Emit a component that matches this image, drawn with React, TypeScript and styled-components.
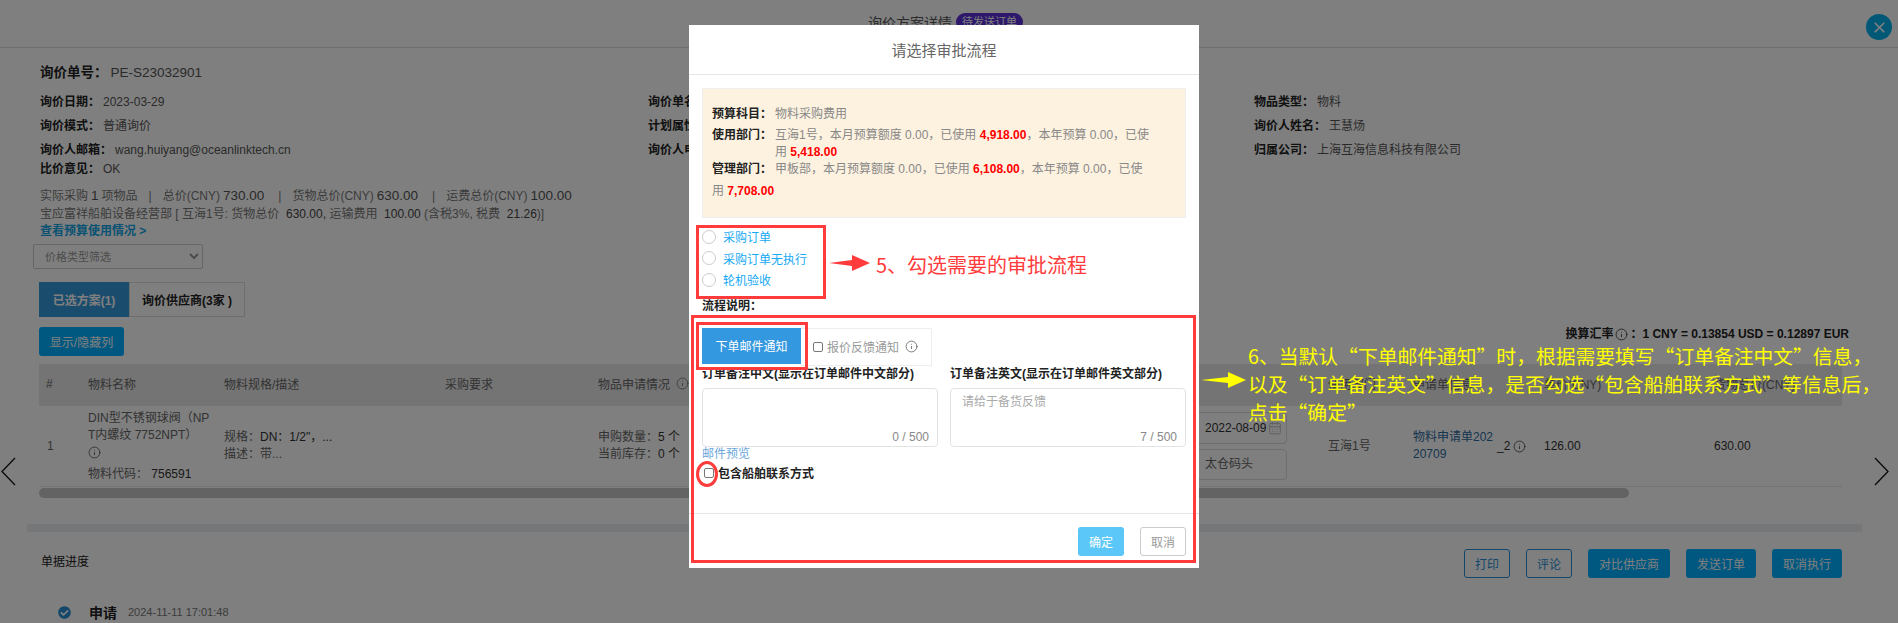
import React from 'react'
import styled, { createGlobalStyle } from 'styled-components'
import { Info, CalendarDays, X } from 'lucide-react'
import { FaCheckCircle } from 'react-icons/fa'

const BLUE = '#00aeff'
const COLUMNS = '49px 136px 221px 153px 502px 228px 85px 131px 170px 128px'

const GlobalStyle = createGlobalStyle`
  html, body {
    margin: 0;
    height: 623px;
    overflow: hidden;
    background: #fff;
    font-family: "Liberation Sans", "Noto Sans CJK SC", sans-serif;
    font-size: 12px;
    color: #666;
  }
  * { box-sizing: border-box; }
`

const Page = styled.div`
  position: relative;
  width: 1898px;
  height: 623px;
  overflow: hidden;
  background: #fff;
`

const TopBar = styled.header`
  height: 48px;
  padding: 12px 7px 0 0;
  border-bottom: 1px solid #ddd;
  display: flex;
  align-items: flex-start;
  justify-content: center;
  gap: 4px;
  font-size: 14px;
  color: #555;
`

const Badge = styled.span`
  background: #5b30d6;
  color: #fff;
  border-radius: 10px;
  padding: 2px 6px;
  font-size: 11px;
  line-height: 14px;
  margin-top: 1px;
`

const CloseButton = styled.div`
  position: absolute;
  left: 1866px;
  top: 14px;
  width: 26px;
  height: 26px;
  border-radius: 50%;
  background: #00b0ee;
  color: #fff;
  display: flex;
  align-items: center;
  justify-content: center;
`

const Content = styled.main`
  padding: 0 56px 0 39px;
`

const Label = styled.b`
  color: #222;
  font-weight: 700;
  margin-right: 3px;
`

const DocNo = styled.div`
  margin-top: 15px;
  height: 20px;
  line-height: 20px;
  font-size: 13.5px;
  padding-left: 1px;
  color: #555;
`

const InfoGrid = styled.div`
  margin-top: 5px;
  padding-left: 1px;
  display: grid;
  grid-template-columns: 608px 606px 1fr;
  grid-auto-rows: 24px;
  align-items: center;
  color: #555;
`

const Remark = styled.div`
  padding-left: 1px;
  height: 18px;
  line-height: 18px;
  color: #555;
`

const Summary = styled.div`
  margin-top: 9px;
  padding-left: 1px;
  line-height: 18px;
  color: #777;
  white-space: nowrap;
`

const Num = styled.span`
  font-size: 13.5px;
  color: #555;
  margin: 0 3px;
`

const Sep = styled.span`
  margin: 0 11px;
`

const Money = styled.span`
  color: #444;
`

const BudgetLink = styled.div`
  padding-left: 1px;
  height: 17px;
  line-height: 17px;
  color: #12a5e6;
  font-weight: 700;
`

const PriceSelect = styled.select`
  display: block;
  margin: 4px 0 0 -6px;
  width: 170px;
  height: 25px;
  border: 1px solid #ccc;
  border-radius: 2px;
  background: #fff;
  padding-left: 7px;
  color: #999;
  font-size: 11px;
  font-family: inherit;
`

const Tabs = styled.div`
  margin-top: 13px;
  display: flex;
  height: 35px;
`

const PageTab = styled.div<{ $active?: boolean }>`
  display: flex;
  align-items: center;
  justify-content: center;
  font-weight: 700;
  width: ${p => (p.$active ? 90 : 116)}px;
  background: ${p => (p.$active ? '#3498db' : '#fff')};
  color: ${p => (p.$active ? '#fff' : '#222')};
  border: ${p => (p.$active ? 'none' : '1px solid #ddd')};
`

const Toolbar = styled.div`
  margin-top: 10px;
  height: 29px;
  display: flex;
  justify-content: space-between;
  align-items: flex-start;
`

const SolidButton = styled.div<{ $width: number }>`
  width: ${p => p.$width}px;
  height: 29px;
  border-radius: 3px;
  background: ${BLUE};
  color: #fff;
  display: flex;
  align-items: center;
  justify-content: center;
`

const OutlineButton = styled(SolidButton)`
  background: #fff;
  color: #2a8fd6;
  border: 1px solid #2a8fd6;
`

const Rate = styled.div`
  margin-right: -7px;
  line-height: 14px;
  color: #222;
  font-weight: 700;
  font-size: 12px;
  display: flex;
  align-items: center;
  gap: 2px;
  white-space: nowrap;
`

const TableHead = styled.div`
  margin-top: 8px;
  height: 42px;
  background: #e8e8e8;
  display: grid;
  grid-template-columns: ${COLUMNS};
  align-items: center;
  color: #666;
  padding-bottom: 3px;
`

const TableRow = styled.div`
  height: 81px;
  border-bottom: 1px solid #e8e8e8;
  display: grid;
  grid-template-columns: ${COLUMNS};
  align-items: center;
  color: #666;
`

const HeadCell = styled.div<{ $pad?: number }>`
  padding-left: ${p => p.$pad ?? 0}px;
  display: flex;
  align-items: center;
  gap: 6px;
  white-space: nowrap;
`

const Cell = styled.div<{ $pad?: number }>`
  padding-left: ${p => p.$pad ?? 0}px;
  line-height: 17px;
  white-space: nowrap;
`

const DarkNum = styled.span`
  color: #333;
`

const InfoLine = styled.div`
  height: 17px;
  display: flex;
  align-items: center;
  color: #444;
`

const CodeLine = styled.div`
  margin-top: 5px;
`

const RowInput = styled.div<{ $height: number }>`
  width: 187px;
  height: ${p => p.$height}px;
  border: 1px solid #ddd;
  border-radius: 4px;
  padding: 0 4px 0 104px;
  display: flex;
  align-items: center;
  justify-content: space-between;
  color: #666;
  & + & { margin-top: 5px; }
`

const DateValue = styled.span`
  color: #333;
`

const RequestLink = styled.div`
  width: 84px;
  color: #2d6aa0;
  word-break: break-all;
  white-space: normal;
`

const RequestCell = styled.div`
  display: flex;
  align-items: center;
  line-height: 17px;
  color: #333;
`

const Suffix = styled.span`
  display: flex;
  align-items: center;
  gap: 3px;
`

const ScrollTrack = styled.div`
  margin-top: 1px;
  height: 10px;
`

const ScrollThumb = styled.div`
  width: 1590px;
  height: 10px;
  border-radius: 5px;
  background: #c6c6c6;
`

const Band = styled.div`
  margin: 26px -20px 0 -12px;
  height: 8px;
  background: #eceff3;
`

const ProgressBar = styled.div`
  margin-top: 17px;
  padding-left: 2px;
  display: flex;
  align-items: center;
  justify-content: space-between;
`

const ProgressTitle = styled.div`
  color: #222;
  padding-bottom: 7px;
`

const Actions = styled.div`
  display: flex;
  gap: 16px;
`

const Step = styled.div`
  margin-top: 25px;
  padding-left: 19px;
  height: 18px;
  display: flex;
  align-items: center;
  color: #2a8fd6;
`

const StepName = styled.span`
  margin-left: 18px;
  color: #222;
  font-size: 14px;
  font-weight: 700;
`

const StepTime = styled.span`
  margin-left: 11px;
  color: #777;
  font-size: 11px;
`

const PagerArrow = styled.svg<{ $side: 'left' | 'right' }>`
  position: absolute;
  top: 457px;
  left: ${p => (p.$side === 'left' ? 1 : 1874)}px;
`

const Overlay = styled.div`
  position: absolute;
  inset: 0;
  padding: 25px 10px 0 0;
  background: rgba(0, 0, 0, 0.5);
  display: flex;
  justify-content: center;
  align-items: flex-start;
`

const Modal = styled.section`
  position: relative;
  width: 510px;
  height: 543px;
  background: #fff;
  color: #888;
`

const ModalHeader = styled.div`
  height: 50px;
  border-bottom: 1px solid #e5e5e5;
  display: flex;
  align-items: center;
  justify-content: center;
  font-size: 15px;
  color: #666;
`

const ModalBody = styled.div`
  padding: 13px 13px 0;
`

const Notice = styled.div`
  height: 130px;
  padding: 16px 0 0 9px;
  background: #fdf2e0;
  border: 1px solid #eee;
  white-space: nowrap;
`

const NoticeLine = styled.div`
  line-height: 18px;
  margin-bottom: 3.5px;
`

const NoticeRow = styled.div`
  display: flex;
  line-height: 17px;
`

const NoticeWrap = styled.div`
  line-height: 22px;
  margin-top: -2.5px;
`

const NoticeLabel = styled.b<{ $width: number }>`
  display: inline-block;
  width: ${p => p.$width}px;
  flex: none;
  color: #222;
`

const Amount = styled.b`
  color: #f00;
`

const RadioList = styled.div`
  margin-top: 8px;
`

const RadioRow = styled.label`
  height: 21.5px;
  display: flex;
  align-items: center;
  color: #16a9f5;
`

const RadioDot = styled.span`
  width: 14px;
  height: 14px;
  border: 1px solid #ccc;
  border-radius: 50%;
  margin-right: 7px;
`

const FlowTitle = styled.div`
  margin-top: 7px;
  line-height: 16px;
  color: #222;
  font-weight: 700;
`

const NotifyTabs = styled.div`
  margin-top: 14px;
  height: 38px;
  display: flex;
  align-items: flex-start;
`

const NotifyActive = styled.div`
  width: 99px;
  height: 36px;
  background: #3498e0;
  color: #fff;
  display: flex;
  align-items: center;
  justify-content: center;
`

const NotifyOption = styled.div`
  width: 131px;
  height: 38px;
  border: 1px solid #eee;
  border-left: none;
  padding-left: 12px;
  display: flex;
  align-items: center;
  color: #999;
  svg { color: #555; }
`

const CheckBox = styled.span`
  width: 10px;
  height: 10px;
  border: 1px solid #777;
  border-radius: 2px;
  flex: none;
`

const OptionText = styled.span`
  margin: 0 6px 0 4px;
`

const Fields = styled.div`
  display: grid;
  grid-template-columns: 236px 236px;
  column-gap: 12px;
`

const FieldLabel = styled.div`
  line-height: 16px;
  color: #222;
  font-weight: 700;
  white-space: nowrap;
`

const NoteBox = styled.div`
  position: relative;
  margin-top: 6px;
  height: 59px;
  border: 1px solid #e3e3e3;
  border-radius: 4px;
  padding: 6px 11px;
  color: #aaa;
  line-height: 14px;
`

const Counter = styled.span`
  position: absolute;
  right: 8px;
  bottom: 2px;
  color: #888;
`

const PreviewLink = styled.div`
  line-height: 14px;
  color: #6aa6dc;
`

const ContactRow = styled.div`
  margin-top: 3px;
  height: 18px;
  padding-left: 2px;
  display: flex;
  align-items: center;
  gap: 4px;
  color: #222;
  font-weight: 700;
`

const ModalFooter = styled.div`
  margin-top: 31px;
  border-top: 1px solid #e5e5e5;
  padding: 13px 13px 0;
  display: flex;
  justify-content: flex-end;
  gap: 16px;
`

const ConfirmButton = styled.div`
  width: 46px;
  height: 29px;
  border-radius: 3px;
  background: #5bc7f8;
  color: #fff;
  display: flex;
  align-items: center;
  justify-content: center;
`

const CancelButton = styled(ConfirmButton)`
  background: #fff;
  color: #999;
  border: 1px solid #ccc;
`

const Highlight = styled.div<{ $x: number; $y: number; $w: number; $h: number; $round?: boolean }>`
  position: absolute;
  left: ${p => p.$x}px;
  top: ${p => p.$y}px;
  width: ${p => p.$w}px;
  height: ${p => p.$h}px;
  border: 3px solid #ff3b3b;
  border-radius: ${p => (p.$round ? '50%' : '0')};
  pointer-events: none;
`

const RedNote = styled.div`
  position: absolute;
  left: 876px;
  top: 251px;
  line-height: 28px;
  font-size: 20px;
  color: #ff3b3b;
  font-family: "Noto Sans CJK SC", sans-serif;
  white-space: nowrap;
`

const YellowNote = styled.div`
  position: absolute;
  left: 1248px;
  top: 342px;
  line-height: 28px;
  font-size: 19.8px;
  color: #ffff00;
  font-family: "Noto Sans CJK SC", sans-serif;
  white-space: nowrap;
`

const NoteArrow = styled.svg<{ $x: number; $y: number }>`
  position: absolute;
  left: ${p => p.$x}px;
  top: ${p => p.$y}px;
`

const InfoIcon = () => <Info size={13} strokeWidth={1.4} />

const Arrow = ({ x, y, width, color }: { x: number; y: number; width: number; color: string }) => (
  <NoteArrow $x={x} $y={y} width={width} height="16" viewBox={`0 0 ${width} 16`}>
    <polygon
      points={`0,8 ${width - 18},5 ${width - 18},0 ${width},8 ${width - 18},16 ${width - 18},11`}
      fill={color}
    />
  </NoteArrow>
)

export default function App() {
  return (
    <Page lang="zh-CN">
      <GlobalStyle />
      <TopBar>
        询价方案详情<Badge>待发送订单</Badge>
      </TopBar>
      <CloseButton>
        <X size={17} strokeWidth={2.4} />
      </CloseButton>

      <Content>
        <DocNo>
          <Label>询价单号&#xFF1A;</Label>PE-S23032901
        </DocNo>
        <InfoGrid>
          <div><Label>询价日期&#xFF1A;</Label>2023-03-29</div>
          <div><Label>询价单名称&#xFF1A;</Label></div>
          <div><Label>物品类型&#xFF1A;</Label>物料</div>
          <div><Label>询价模式&#xFF1A;</Label>普通询价</div>
          <div><Label>计划属性&#xFF1A;</Label></div>
          <div><Label>询价人姓名&#xFF1A;</Label>王慧炀</div>
          <div><Label>询价人邮箱&#xFF1A;</Label>wang.huiyang@oceanlinktech.cn</div>
          <div><Label>询价人电话&#xFF1A;</Label></div>
          <div><Label>归属公司&#xFF1A;</Label>上海互海信息科技有限公司</div>
        </InfoGrid>
        <Remark>
          <Label>比价意见&#xFF1A;</Label>OK
        </Remark>
        <Summary>
          实际采购<Num>1</Num>项物品<Sep>|</Sep>总价(CNY)<Num>730.00</Num><Sep>|</Sep>
          货物总价(CNY)<Num>630.00</Num><Sep>|</Sep>运费总价(CNY)<Num>100.00</Num>
          <br />
          宝应富祥船舶设备经营部 [ 互海1号: 货物总价&nbsp; <Money>630.00,</Money> 运输费用&nbsp; <Money>100.00</Money> (含税3%, 税费&nbsp; <Money>21.26</Money>)]
        </Summary>
        <BudgetLink>查看预算使用情况 &gt;</BudgetLink>
        <PriceSelect defaultValue="">
          <option value="">价格类型筛选</option>
        </PriceSelect>
        <Tabs>
          <PageTab $active>已选方案(1)</PageTab>
          <PageTab>询价供应商(3家 )</PageTab>
        </Tabs>
        <Toolbar>
          <SolidButton $width={85}>显示/隐藏列</SolidButton>
          <Rate>
            换算汇率 <InfoIcon />&#xFF1A;1 CNY = 0.13854 USD = 0.12897 EUR
          </Rate>
        </Toolbar>

        <TableHead>
          <HeadCell $pad={7}>#</HeadCell>
          <HeadCell>物料名称</HeadCell>
          <HeadCell>物料规格/描述</HeadCell>
          <HeadCell>采购要求</HeadCell>
          <HeadCell>物品申请情况 <InfoIcon /></HeadCell>
          <HeadCell />
          <HeadCell>使用部门</HeadCell>
          <HeadCell>申请单信息</HeadCell>
          <HeadCell>单价(CNY)</HeadCell>
          <HeadCell>货物总价(CNY)</HeadCell>
        </TableHead>
        <TableRow>
          <Cell $pad={8}>1</Cell>
          <Cell>
            DIN型不锈钢球阀&#xFF08;NP
            <br />
            T内螺纹 7752NPT&#xFF09;
            <InfoLine><InfoIcon /></InfoLine>
            <CodeLine>物料代码&#xFF1A;<DarkNum>&nbsp;756591</DarkNum></CodeLine>
          </Cell>
          <Cell>
            规格&#xFF1A;<DarkNum>DN&#xFF1A;1/2"&#xFF0C;...</DarkNum>
            <br />
            描述&#xFF1A;带...
          </Cell>
          <Cell />
          <Cell>
            申购数量&#xFF1A;<DarkNum>5 个</DarkNum>
            <br />
            当前库存&#xFF1A;<DarkNum>0 个</DarkNum>
          </Cell>
          <Cell>
            <RowInput $height={32}>
              <DateValue>2022-08-09</DateValue>
              <CalendarDays size={14} color="#bbb" strokeWidth={1.6} />
            </RowInput>
            <RowInput $height={31}>太仓码头</RowInput>
          </Cell>
          <Cell>互海1号</Cell>
          <Cell>
            <RequestCell>
              <RequestLink>物料申请单20220709</RequestLink>
              <Suffix>_2 <InfoIcon /></Suffix>
            </RequestCell>
          </Cell>
          <Cell><DarkNum>126.00</DarkNum></Cell>
          <Cell><DarkNum>630.00</DarkNum></Cell>
        </TableRow>
        <ScrollTrack>
          <ScrollThumb />
        </ScrollTrack>
        <Band />

        <ProgressBar>
          <ProgressTitle>单据进度</ProgressTitle>
          <Actions>
            <OutlineButton $width={46}>打印</OutlineButton>
            <OutlineButton $width={46}>评论</OutlineButton>
            <SolidButton $width={82}>对比供应商</SolidButton>
            <SolidButton $width={70}>发送订单</SolidButton>
            <SolidButton $width={70}>取消执行</SolidButton>
          </Actions>
        </ProgressBar>
        <Step>
          <FaCheckCircle size={13} />
          <StepName>申请</StepName>
          <StepTime>2024-11-11 17:01:48</StepTime>
        </Step>
      </Content>

      <PagerArrow $side="left" width="15" height="29" viewBox="0 0 15 29">
        <polyline points="14,1 1,14.5 14,28" fill="none" stroke="#111" strokeWidth="1.3" />
      </PagerArrow>
      <PagerArrow $side="right" width="15" height="29" viewBox="0 0 15 29">
        <polyline points="1,1 14,14.5 1,28" fill="none" stroke="#111" strokeWidth="1.3" />
      </PagerArrow>

      <Overlay>
        <Modal>
          <ModalHeader>请选择审批流程</ModalHeader>
          <ModalBody>
            <Notice>
              <NoticeLine>
                <NoticeLabel $width={63}>预算科目&#xFF1A;</NoticeLabel>物料采购费用
              </NoticeLine>
              <NoticeRow>
                <NoticeLabel $width={63}>使用部门&#xFF1A;</NoticeLabel>
                <span>
                  互海1号&#xFF0C;本月预算额度 0.00&#xFF0C;已使用 <Amount>4,918.00</Amount>&#xFF0C;本年预算 0.00&#xFF0C;已使
                  <br />
                  用 <Amount>5,418.00</Amount>
                </span>
              </NoticeRow>
              <NoticeWrap>
                <NoticeLabel $width={63}>管理部门&#xFF1A;</NoticeLabel>
                甲板部&#xFF0C;本月预算额度 0.00&#xFF0C;已使用 <Amount>6,108.00</Amount>&#xFF0C;本年预算 0.00&#xFF0C;已使
                <br />
                用 <Amount>7,708.00</Amount>
              </NoticeWrap>
            </Notice>
            <RadioList>
              <RadioRow><RadioDot />采购订单</RadioRow>
              <RadioRow><RadioDot />采购订单无执行</RadioRow>
              <RadioRow><RadioDot />轮机验收</RadioRow>
            </RadioList>
            <FlowTitle>流程说明&#xFF1A;</FlowTitle>
            <NotifyTabs>
              <NotifyActive>下单邮件通知</NotifyActive>
              <NotifyOption>
                <CheckBox />
                <OptionText>报价反馈通知</OptionText>
                <InfoIcon />
              </NotifyOption>
            </NotifyTabs>
            <Fields>
              <div>
                <FieldLabel>订单备注中文(显示在订单邮件中文部分)</FieldLabel>
                <NoteBox>
                  <Counter>0 / 500</Counter>
                </NoteBox>
              </div>
              <div>
                <FieldLabel>订单备注英文(显示在订单邮件英文部分)</FieldLabel>
                <NoteBox>
                  请给于备货反馈
                  <Counter>7 / 500</Counter>
                </NoteBox>
              </div>
            </Fields>
            <PreviewLink>邮件预览</PreviewLink>
            <ContactRow>
              <CheckBox />
              包含船舶联系方式
            </ContactRow>
          </ModalBody>
          <ModalFooter>
            <ConfirmButton>确定</ConfirmButton>
            <CancelButton>取消</CancelButton>
          </ModalFooter>

          <Highlight $x={7} $y={200} $w={130} $h={74} />
          <Highlight $x={2} $y={290} $w={505} $h={248} />
          <Highlight $x={7} $y={297} $w={112} $h={48} />
          <Highlight $x={7} $y={436} $w={22} $h={26} $round />
        </Modal>
      </Overlay>

      <Arrow x={829} y={255} width={41} color="#ff3b3b" />
      <RedNote>5、勾选需要的审批流程</RedNote>
      <Arrow x={1201} y={372} width={45} color="#ffff00" />
      <YellowNote>
        6、当默认&#x201C;下单邮件通知&#x201D;时&#xFF0C;根据需要填写&#x201C;订单备注中文&#x201D;信息&#xFF0C;
        <br />
        以及&#x201C;订单备注英文&#x201D;信息&#xFF0C;是否勾选&#x201C;包含船舶联系方式&#x201D;等信息后&#xFF0C;
        <br />
        点击&#x201C;确定&#x201D;
      </YellowNote>
    </Page>
  )
}
